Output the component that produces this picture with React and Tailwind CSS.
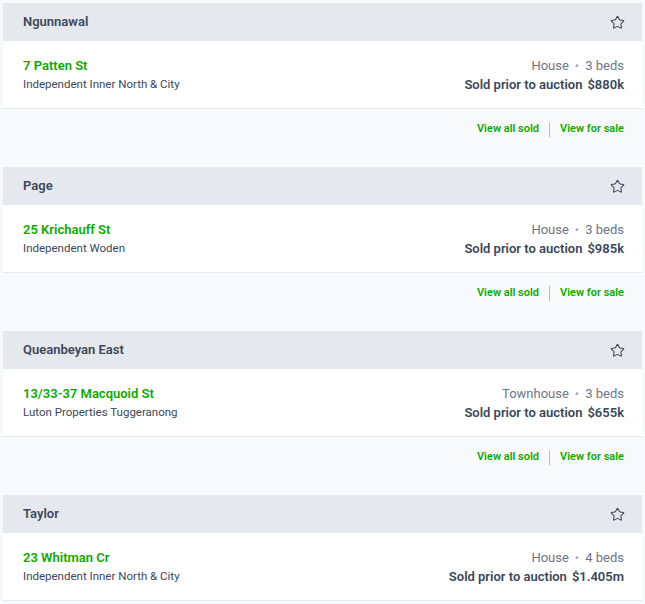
import { Star } from 'lucide-react';

const sales = [
  {
    suburb: 'Ngunnawal',
    address: '7 Patten St',
    agency: 'Independent Inner North & City',
    type: 'House',
    beds: '3 beds',
    price: '$880k',
  },
  {
    suburb: 'Page',
    address: '25 Krichauff St',
    agency: 'Independent Woden',
    type: 'House',
    beds: '3 beds',
    price: '$985k',
  },
  {
    suburb: 'Queanbeyan East',
    address: '13/33-37 Macquoid St',
    agency: 'Luton Properties Tuggeranong',
    type: 'Townhouse',
    beds: '3 beds',
    price: '$655k',
  },
  {
    suburb: 'Taylor',
    address: '23 Whitman Cr',
    agency: 'Independent Inner North & City',
    type: 'House',
    beds: '4 beds',
    price: '$1.405m',
  },
];

function SaleCard({ sale }) {
  return (
    <div>
      {/* Suburb header */}
      <div className="h-[38px] bg-[#e5e8ed] flex items-center justify-between pl-5 pr-[17px]">
        <span className="text-[13px] font-semibold text-[#3c475b]">{sale.suburb}</span>
        <Star size={15} strokeWidth={1.7} className="text-[#3c475b]" />
      </div>

      {/* Listing */}
      <div className="h-[68px] bg-white border-b border-[#e5e8ed] flex justify-between pl-5 pr-[18px] pt-[15px]">
        <div className="leading-[19px]">
          <div className="text-[13px] font-semibold text-[#0ea800]">{sale.address}</div>
          <div className="text-[11.5px] text-[#3c475b]">{sale.agency}</div>
        </div>
        <div className="leading-[19px] text-right">
          <div className="text-[13px] text-[#6d7584]">
            {sale.type}
            <span className="mx-[6px] text-[#a9b0bb]">•</span>
            {sale.beds}
          </div>
          <div className="text-[13px] font-semibold text-[#3c475b]">
            Sold prior to auction
            <span className="ml-[5px]">{sale.price}</span>
          </div>
        </div>
      </div>

      {/* Links */}
      <div className="h-[58px] flex justify-end items-start pt-[12px] pr-[18px]">
        <div className="flex items-center text-[11px] font-semibold text-[#0ea800] leading-[16px]">
          <span>View all sold</span>
          <span className="mx-[10px] w-px h-[15px] bg-[#b7bcc4]" />
          <span>View for sale</span>
        </div>
      </div>
    </div>
  );
}

export default function App() {
  return (
    <div
      className="min-h-screen bg-[#f8f9fb] pt-[3px] px-[3px]"
      style={{ fontFamily: 'Roboto, "Liberation Sans", sans-serif' }}
    >
      {sales.map((s) => (
        <SaleCard key={s.address} sale={s} />
      ))}
    </div>
  );
}
